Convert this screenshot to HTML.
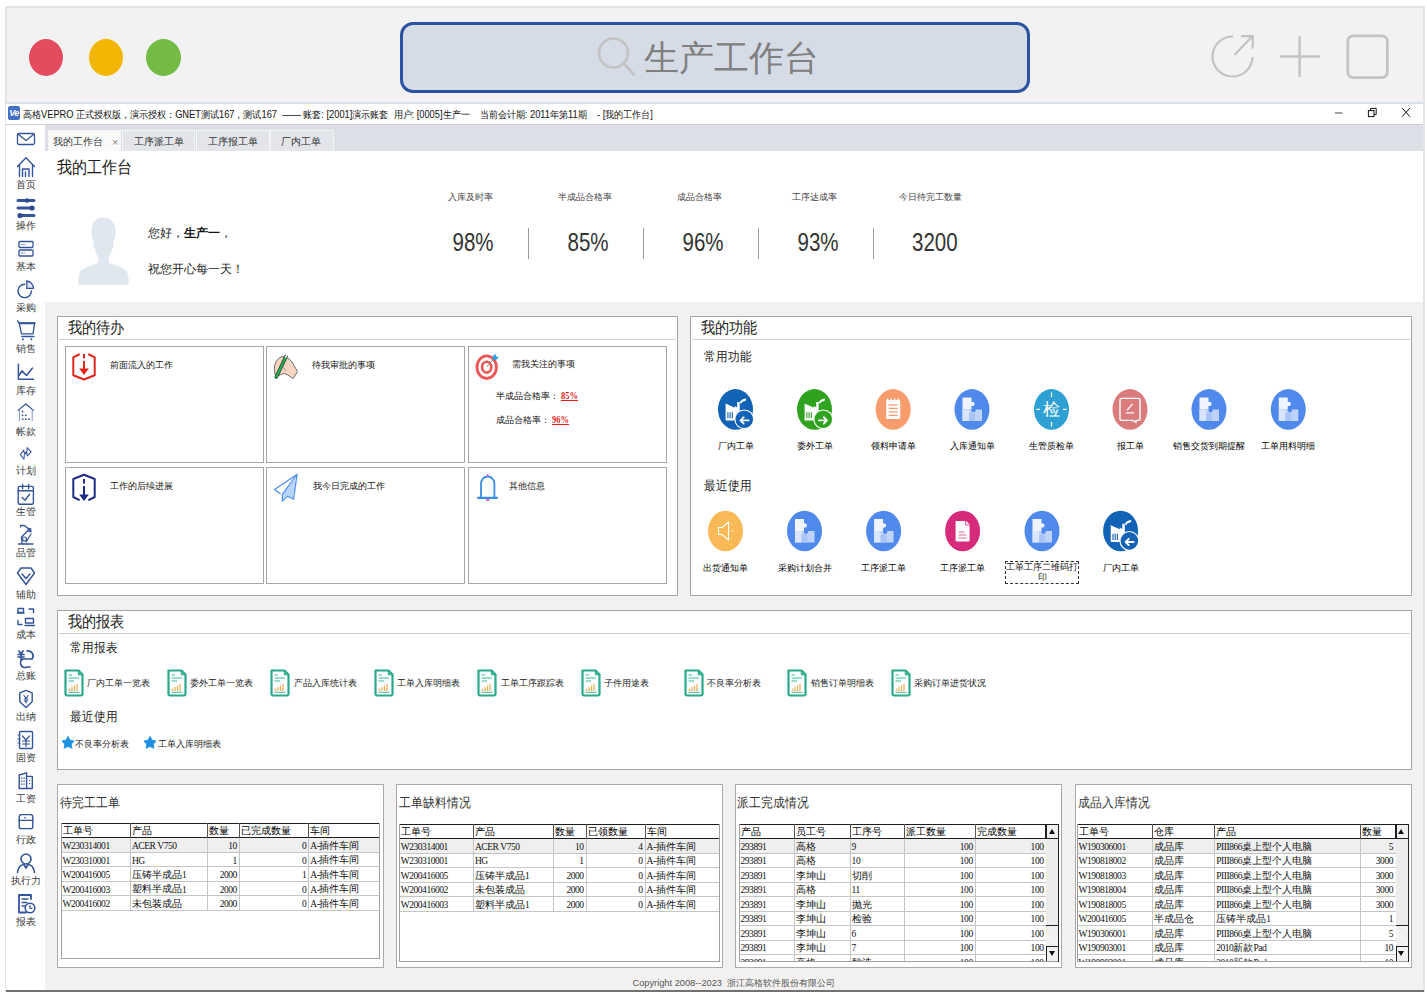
<!DOCTYPE html>
<html><head><meta charset="utf-8">
<style>
*{box-sizing:border-box;margin:0;padding:0}
html,body{width:1427px;height:992px;overflow:hidden;background:#fff;font-family:"Liberation Sans",sans-serif;color:#222}
.a{position:absolute}
.nw{white-space:nowrap}
#frame{left:5px;top:6px;width:1419.5px;height:986px;background:#f2f2f2;border:2px solid #e4e4e4;border-bottom:none}
.dot{position:absolute;border-radius:50%}
#search{left:400px;top:22px;width:630px;height:71px;border:3px solid #2b53a3;border-radius:13px;background:#d6dce6}
#titlebar{left:6px;top:102px;width:1417px;height:23px;background:#fff;border-top:2px solid #d9e0ea;border-bottom:1.5px solid #cfcfcf}
#tabbar{left:45px;top:125px;width:1378px;height:26px;background:#dcdfe6}
.tab{position:absolute;top:5px;height:21px;background:#e3e5ea;border:1px solid #f3f4f6;border-bottom:none;font-size:10px;color:#333;line-height:21px}
#sidebar{left:6px;top:125px;width:39px;height:865px;background:#fff}
#content{left:45px;top:151px;width:1378px;height:839px;background:#f2f1f0}
#header{left:45px;top:151px;width:1378px;height:151px;background:#fff}
.panel{position:absolute;background:#fff;border:1px solid #a6a6a6}
.ptitle{transform:scaleY(1.13);position:absolute;left:10px;top:0px;font-size:14px;color:#222;line-height:20px}
.psep{position:absolute;left:1px;right:1px;top:22px;height:1px;background:#cfcfcf}
.card{position:absolute;background:#fff;border:1px solid #a6a6a6}
.ctext{position:absolute;font-size:9px;color:#111;white-space:nowrap;line-height:12px}
.lbl{position:absolute;font-size:9px;color:#000;white-space:nowrap;text-align:center;line-height:12px}
.stat-l{position:absolute;top:190.5px;width:115px;text-align:center;font-size:9px;color:#444;line-height:12px}
.stat-n{position:absolute;top:227px;width:115px;text-align:center;font-size:25px;color:#333;line-height:30px}
.stat-d{position:absolute;top:228px;width:1px;height:31px;background:#9a9a9a}
.side-i{position:absolute;left:7px;width:38px;text-align:center}
.side-l{position:absolute;left:6px;width:40px;text-align:center;font-size:9.5px;color:#3a3a3a;line-height:12px}
.cond{display:inline-block;transform:scaleX(0.82);transform-origin:center}
.ttl{font-size:11.5px;line-height:16px;color:#333;transform:scaleY(1.1)}
.th{font-size:10px;line-height:12px;color:#000}
.td{font-size:9.5px;line-height:12px;color:#111}
.td i{font-style:normal;font-family:"Liberation Serif",serif;font-size:9.5px;letter-spacing:-0.45px;position:relative;top:0.3px}
.sy{transform:scaleY(1.13);transform-origin:50% 50%}
</style></head><body>
<svg width="0" height="0" style="position:absolute">
<defs>
<g id="factory">
<path d="M-9.9 -5.8 L-0.8 -1.7 V-3.5 L1.7 -2 V-7.3 H4.2 V2 L6 3 V11 H-9.9 Z" fill="#fff"/>
<path d="M4.2 -6.5 Q5 -10.5 10.5 -11 Q11 -9 9.5 -8.5 Q7 -8.5 5.5 -6 Z" fill="#fff"/>
<path d="M-7.6 2.8 V8.9 M-5.4 2.8 V8.9 M-3.2 2.8 V8.9" stroke="currentColor" stroke-width="1.1"/>
<circle cx="8.75" cy="9.9" r="9.9" fill="#fff"/>
<circle cx="8.75" cy="9.9" r="8.8" fill="currentColor"/>
</g>
<g id="puzzle">
<path d="M-9.5 -12 H-0.5 V-7.5 A2.2 2.2 0 1 1 -0.5 -3.5 V0 H-9.5 Z" fill="#eef3fd"/>
<path d="M-9.5 0 H-0.5 V-0.2 A2.2 2.2 0 1 0 3.6 0 H10 V11.5 H-9.5 Z" fill="#bfd3fa"/>
<path d="M-9.5 0 H-3 V11.5 H-9.5 Z" fill="#d9e5fc"/>
<path d="M-3 6 A3 3 0 0 1 3 6 V11.5 H-3 Z" fill="#a9c3f6"/>
</g>
</defs></svg>

<div id="frame" class="a"></div>
<div id="titlebar" class="a"></div>
<div id="tabbar" class="a"><div class="tab" style="left:3px;width:73px;background:#fafafa;border-color:#f6f6f6;padding-left:4px">我的工作台<span style="position:absolute;left:63px;top:1px;color:#888;font-size:11px">×</span></div>
<div class="tab" style="left:77px;width:73px;padding-left:11px">工序派工单</div>
<div class="tab" style="left:151px;width:74px;padding-left:11px">工序报工单</div>
<div class="tab" style="left:225px;width:64px;padding-left:10px">厂内工单</div></div>
<div id="sidebar" class="a"></div>
<div id="content" class="a"></div>
<div id="header" class="a"></div>
<div class="dot" style="left:29px;top:39px;width:34px;height:37px;background:#e44b5e"></div>
<div class="dot" style="left:89px;top:39px;width:34px;height:37px;background:#f2b705"></div>
<div class="dot" style="left:146px;top:39px;width:35px;height:37px;background:#73bb44"></div>
<div id="search" class="a"></div>
<svg class="a" style="left:590px;top:30px" width="60" height="56" viewBox="590 30 60 56">
<circle cx="613.5" cy="53" r="14.5" fill="none" stroke="#c3c3c3" stroke-width="2.6"/>
<line x1="623.5" y1="63.5" x2="634.5" y2="75" stroke="#c3c3c3" stroke-width="2.8"/>
</svg>
<div class="a nw" style="left:644px;top:33px;font-size:35px;line-height:50px;color:#808080">生产工作台</div>
<svg class="a" style="left:1200px;top:25px" width="200" height="65" viewBox="1200 25 200 65">
<path d="M1233 36.5 A20 20 0 1 0 1252.5 57" fill="none" stroke="#c3c3c3" stroke-width="2.2"/>
<path d="M1234.5 55 L1252 36.5 M1241 36.2 H1252.7 V48.5" fill="none" stroke="#c3c3c3" stroke-width="2.2"/>
<path d="M1299.6 36 V77 M1280 56.5 H1320" fill="none" stroke="#c3c3c3" stroke-width="2.4"/>
<rect x="1347.8" y="35.8" width="39.5" height="41.8" rx="5.5" fill="none" stroke="#c3c3c3" stroke-width="2.8"/>
</svg>
<div class="a" style="left:8px;top:106px;width:12px;height:14px;background:#4470c4;border-radius:2px;color:#fff;font-size:9px;font-weight:bold;font-style:italic;line-height:14px;text-align:center;letter-spacing:-0.5px">Ve</div>
<div class="a nw" style="left:23px;top:107.5px;font-size:9.3px;line-height:14px;color:#111;transform:scaleY(1.1);transform-origin:0 50%">高格VEPRO 正式授权版，演示授权：GNET测试167，测试167 &nbsp;—— 账套: [2001]演示账套 &nbsp;用户: [0005]生产一 &nbsp; &nbsp;当前会计期: 2011年第11期 &nbsp; &nbsp;- [我的工作台]</div>
<svg class="a" style="left:1320px;top:100px" width="100" height="25" viewBox="1320 100 100 25">
<line x1="1335" y1="113" x2="1342.5" y2="113" stroke="#666" stroke-width="1.2"/>
<rect x="1368.4" y="110.6" width="5.6" height="6" fill="#fff" stroke="#111" stroke-width="1"/>
<path d="M1370.4 110.6 V108.4 H1376.2 V114.6 H1374" fill="none" stroke="#111" stroke-width="1"/>
<path d="M1402 108 L1410 116.8 M1410 108 L1402 116.8" stroke="#111" stroke-width="1"/>
</svg>

<svg class="a" style="left:6px;top:125px" width="39" height="810" viewBox="6 125 39 810" fill="none" stroke="#33539a" stroke-width="1.3" stroke-linejoin="round" stroke-linecap="round">
<rect x="17.5" y="133.5" width="17" height="11" rx="1.5"/><path d="M18.5 134.5 L26 140.5 L33.5 134.5"/>
<path d="M17.5 166.5 L26 157.8 L34.5 166.5 M19.5 165 V176.5 M32.5 165 V176.5 M22.5 176.5 V169 H29 V176.5 M25.5 176.5 V172" stroke-width="1.4"/>
<g stroke-width="3"><path d="M18 200.5 H34 M18 208 H33 M21 215.5 H34"/></g>
<g fill="#2d4b8e" stroke="none"><circle cx="27" cy="200.5" r="2.3"/><circle cx="32" cy="208" r="2.6"/><circle cx="20" cy="215.5" r="2.6"/></g>
<rect x="19" y="241.5" width="14" height="6" rx="1"/><rect x="19" y="250" width="14" height="6" rx="1"/>
<path d="M21 244.5 H25 M21 253 H25" stroke="#7fa0d8" stroke-width="1"/>
<path d="M24.7 284.2 A6.7 6.7 0 1 0 31.4 290.9" stroke-width="1.4"/><path d="M26.8 281 A7.4 7.4 0 0 1 33.4 288.4 H26.8 Z" fill="#dfe7f6" stroke-width="1.3"/>
<path d="M17.6 321 L19.2 323.2 L21.5 333.8 H33 L34.6 323.2 H19.2" stroke-width="1.3"/><path d="M19.5 323.2 H34.6" stroke-width="2"/><path d="M21.8 336.5 H34" stroke-width="1.3"/><circle cx="22.9" cy="339.2" r="1" fill="#33539a" stroke="none"/><circle cx="31.4" cy="339.2" r="1" fill="#33539a" stroke="none"/>
<path d="M18.4 364.2 V379.3 H33.5 M19 375.5 L21.9 370.9 L26.5 375.5 L32.5 368" stroke-width="1.5"/>
<path d="M18 410.4 L25.8 404 L33.5 410.4" stroke-width="1.2"/><path d="M19.4 409.5 V420.6 M32.2 409.5 V420.6" stroke-width="1" stroke="#7d93c4"/><g fill="#33539a" stroke="none"><circle cx="22.6" cy="411.5" r="0.9"/><circle cx="22.6" cy="415.3" r="0.9"/><circle cx="25.8" cy="415.3" r="0.9"/><circle cx="22.6" cy="419.2" r="0.9"/><circle cx="25.8" cy="419.2" r="0.9"/><circle cx="29" cy="419.2" r="0.9"/></g>
<path d="M27.2 447.6 L31.1 451.8 L27.3 456 L27.2 453.7 L24.4 453.6 L26.9 451 Z M24 459.2 L20.4 454.6 L23.8 450 L24 452.3 L26.8 452.4 L24.3 455.2 Z" stroke-width="1.05"/>
<rect x="18.2" y="486.4" width="15.2" height="17.8" rx="1.5" stroke-width="1.4"/><path d="M18.2 490.8 H33.4 M22.6 484.5 V488.7 M28.6 484.5 V488.7 M22.2 497.5 L25 500.3 L29.6 494.3" stroke-width="1.4"/>
<path d="M18.5 544 H33 M22 543.5 L21.5 537 L29 529.5 M20.5 527 V525.5 H24.5 L29.5 529.5 L31 532" stroke-width="1.3"/><circle cx="24.5" cy="539" r="2" stroke-width="1.2"/><circle cx="29.5" cy="530" r="1.6" stroke-width="1.1"/><path d="M26 542 L31 534" stroke-width="1.2"/>
<path d="M21 568 H31 L34.5 573 L26 584.5 L17.5 573 Z" stroke-width="1.4"/><path d="M22 574 L26 578.5 L30 574" stroke-width="1.4"/>
<rect x="18" y="608.5" width="5.5" height="4" stroke-width="1.4"/><path d="M17.5 613 H24 M29 609 H33.5 V612.5 M18 620.5 V624.5 H22 M25.5 618.5 H33.5 V623 H25.5 Z M25 625.5 H34.5" stroke-width="1.4"/>
<path d="M19 651 L21 654 L23 651 M18 654.5 H24 M18 657 H24 M21 654 V660 M27 651 A5 5 0 0 1 32 659 H23 A4 4 0 0 0 27 667 L30 667" stroke-width="1.7"/>
<path d="M26 690.4 L32.2 692.8 V701.8 L26 707.4 L19.8 701.8 V692.8 Z" stroke-width="1.4"/><path d="M24 695.5 L26 698.5 L28 695.5 M24.2 699 H27.8 M24.2 701 H27.8 M26 698.5 V703" stroke-width="1.1"/>
<rect x="19.5" y="731.5" width="13" height="17" rx="1" stroke-width="1.4"/><path d="M22.5 736 L26 740 L29.5 736 M22.5 741 H29.5 M22.5 744 H29.5 M26 740 V746.5 M18 735 H20 M18 739 H20 M18 743 H20" stroke-width="1.2"/>
<path d="M19.2 788.5 V775 L26.6 772.8 V788.5 Z M26.6 776.4 H32.3 V788.5 H26.6" stroke-width="1.4"/><g fill="#33539a" stroke="none"><rect x="21" y="777.5" width="1.3" height="1.3"/><rect x="23.4" y="777.5" width="1.3" height="1.3"/><rect x="21" y="780.5" width="1.3" height="1.3"/><rect x="23.4" y="780.5" width="1.3" height="1.3"/><rect x="21" y="783.5" width="1.3" height="1.3"/><rect x="23.4" y="783.5" width="1.3" height="1.3"/><rect x="29" y="780" width="1.1" height="1.1"/><rect x="29" y="783" width="1.1" height="1.1"/></g>
<rect x="19.2" y="814.6" width="13.6" height="14" rx="2.2" stroke-width="1.4"/><path d="M19.2 820.4 H32.8" stroke-width="1.4"/><rect x="24.4" y="817" width="1.4" height="1.4" fill="#33539a" stroke="none"/>
<circle cx="26" cy="859" r="5" stroke-width="1.6"/><path d="M17.5 872.5 Q18.5 865 24 864.5 L26 868 L28 864.5 Q33.5 865 34.5 872.5" stroke-width="1.6"/>
<path d="M31 899 V895 H19 V912.5 H26" stroke-width="1.8"/><path d="M22 899 H28 M22 902.5 H27 M22 906 H25" stroke-width="1.3"/><circle cx="30" cy="908" r="4.8" stroke-width="1.6"/><path d="M30 905.5 V908.3 H32" stroke-width="1.2"/>
</svg>
<div class="side-l" style="top:179px">首页</div><div class="side-l" style="top:220px">操作</div><div class="side-l" style="top:261px">基本</div><div class="side-l" style="top:301.5px">采购</div><div class="side-l" style="top:343px">销售</div><div class="side-l" style="top:384.5px">库存</div><div class="side-l" style="top:425.5px">帐款</div><div class="side-l" style="top:464.5px">计划</div><div class="side-l" style="top:505.5px">生管</div><div class="side-l" style="top:547px">品管</div><div class="side-l" style="top:588.5px">辅助</div><div class="side-l" style="top:628.5px">成本</div><div class="side-l" style="top:670px">总账</div><div class="side-l" style="top:711px">出纳</div><div class="side-l" style="top:752px">固资</div><div class="side-l" style="top:793px">工资</div><div class="side-l" style="top:833.5px">行政</div><div class="side-l" style="top:875px">执行力</div><div class="side-l" style="top:916px">报表</div>
<div class="a nw sy" style="left:57px;top:157px;font-size:15px;line-height:20px;color:#1a1a1a">我的工作台</div>
<svg class="a" style="left:76px;top:215px" width="56" height="72" viewBox="76 215 56 72">
<path fill="#e1e7ef" d="M103 217.5 C96 217.5 91.5 223 91.5 231 C91.5 236 92.5 240 94 243 C93 244.5 93 246.5 94.5 248 C95.5 252 97.5 256 98.5 258.5 L98 263 C92 265 82 268 80 272 C78.5 275 78 280 78.5 285 L128.5 285 C129 280 128.5 275 127 272 C125 268 115 265 109 263 L108.5 258.5 C109.5 256 111.5 252 112.5 248 C114 246.5 114 244.5 113 243 C114.5 240 115.5 236 115.5 231 C115.5 223 111 217.5 103 217.5 Z"/>
</svg>
<div class="a nw" style="left:148px;top:224px;font-size:12px;line-height:18px;color:#222">您好，<b style="color:#111">生产一</b>，</div>
<div class="a nw" style="left:148px;top:260px;font-size:12px;line-height:18px;color:#222">祝您开心每一天！</div>
<div class="stat-l" style="left:413px">入库及时率</div>
<div class="stat-l" style="left:527px">半成品合格率</div>
<div class="stat-l" style="left:642px">成品合格率</div>
<div class="stat-l" style="left:757px">工序达成率</div>
<div class="stat-l" style="left:873px">今日待完工数量</div>
<div class="stat-n" style="left:416px"><span class="cond">98%</span></div>
<div class="stat-n" style="left:531px"><span class="cond">85%</span></div>
<div class="stat-n" style="left:646px"><span class="cond">96%</span></div>
<div class="stat-n" style="left:761px"><span class="cond">93%</span></div>
<div class="stat-n" style="left:877px"><span class="cond">3200</span></div>
<div class="stat-d" style="left:528px"></div><div class="stat-d" style="left:643px"></div><div class="stat-d" style="left:758px"></div><div class="stat-d" style="left:873px"></div>

<div class="panel" style="left:57px;top:316px;width:621px;height:280px">
<div class="ptitle">我的待办</div><div class="psep"></div></div>
<div class="card" style="left:65px;top:346px;width:199px;height:117px"></div>
<div class="card" style="left:266px;top:346px;width:199px;height:117px"></div>
<div class="card" style="left:468px;top:346px;width:199px;height:117px"></div>
<div class="card" style="left:65px;top:467px;width:199px;height:117px"></div>
<div class="card" style="left:266px;top:467px;width:199px;height:117px"></div>
<div class="card" style="left:468px;top:467px;width:199px;height:117px"></div>
<svg class="a" style="left:66px;top:347px" width="60" height="40" viewBox="66 347 60 40">
<path d="M79 354.5 L73.3 357.3 V375.3 L84 379.5 L94.7 375.3 V357.3 L89 354.5" fill="none" stroke="#e0261b" stroke-width="2" stroke-linejoin="round" stroke-linecap="round"/>
<path d="M84 354 V358.5 M84 361 V370" stroke="#e0261b" stroke-width="2"/>
<path d="M79.2 368.6 H88.9 L84 375 Z" fill="#e0261b"/>
</svg>
<div class="ctext" style="left:110px;top:358.5px">前面流入的工作</div>
<svg class="a" style="left:268px;top:347px" width="40" height="40" viewBox="268 347 40 40">
<path d="M282 356.5 C278 358 275.2 362 274.6 366 C274.2 369 274.4 372 275.2 374.8 L279 375.5 C281 374.5 283 373.2 285 373.6 C288 375 291 377 293.2 378.5 L297.5 371.5 C296.2 369.3 295 367.2 294 365.5 C292.5 362.2 290.5 359.6 287 357.6 Z" fill="#f8d5c2" stroke="#5a5a5a" stroke-width="0.9" stroke-linejoin="round"/>
<path d="M276.3 377 L286 356.5" stroke="#333" stroke-width="3.6" stroke-linecap="round"/>
<path d="M276.3 377 L285.6 357.5" stroke="#1db24b" stroke-width="2.2" stroke-linecap="round"/>
<path d="M285.8 357 L286.6 355.2" stroke="#fff" stroke-width="1.6" stroke-linecap="round"/>
<path d="M281 366 C283 367 285 369 286 371" fill="none" stroke="#7a6a60" stroke-width="0.7"/>
</svg>
<div class="ctext" style="left:311.5px;top:358.5px">待我审批的事项</div>
<svg class="a" style="left:470px;top:347px" width="40" height="40" viewBox="470 347 40 40">
<ellipse cx="486.7" cy="367.2" rx="9.7" ry="11.3" fill="none" stroke="#ef5454" stroke-width="2.8"/>
<ellipse cx="486.7" cy="367.2" rx="4.6" ry="5.4" fill="none" stroke="#ef5454" stroke-width="2.6"/>
<path d="M486.8 367 L494.5 358" stroke="#777" stroke-width="0.9"/>
<path d="M492.5 356.5 L495.5 353.5 L496 356.5 L499 357 L496 360 L493.5 360 Z" fill="#2ea1e0"/>
</svg>
<div class="ctext" style="left:512px;top:358px">需我关注的事项</div>
<div class="ctext" style="left:495.5px;top:389.5px;color:#111;font-size:9.3px">半成品合格率：<b style="color:#e51c1c;text-decoration:underline;font-family:'Liberation Serif',serif;margin-left:2px;font-size:10px;display:inline-block;transform:scaleX(0.85);transform-origin:left">85%</b></div>
<div class="ctext" style="left:495.5px;top:413.5px;color:#111;font-size:9.3px">成品合格率：<b style="color:#e51c1c;text-decoration:underline;font-family:'Liberation Serif',serif;margin-left:2px;font-size:10px;display:inline-block;transform:scaleX(0.85);transform-origin:left">96%</b></div>
<svg class="a" style="left:66px;top:468px" width="60" height="40" viewBox="66 468 60 40">
<path d="M79 499.8 L73.3 497 V479 L84 474.7 L94.7 479 V497 L89 499.8" fill="none" stroke="#1d2a86" stroke-width="2" stroke-linejoin="round" stroke-linecap="round"/>
<path d="M84 479 V483.5 M84 486 V495" stroke="#1d2a86" stroke-width="2"/>
<path d="M79.2 494.5 H88.9 L84 501 Z" fill="#1d2a86"/>
</svg>
<div class="ctext" style="left:110px;top:479.5px">工作的后续进展</div>
<svg class="a" style="left:268px;top:468px" width="40" height="40" viewBox="268 468 40 40">
<path d="M297 474.5 L274.5 489.5 L280.5 494 M297 474.5 L282.5 494.5 L282.5 501 L287.5 496 L293.5 499 Z" fill="none" stroke="#4f8ff0" stroke-width="1.4" stroke-linejoin="round"/>
<path d="M296 476 L283.5 494.5 L283.5 499.5 L287.5 495.5 L293 498.5 Z" fill="#b9d4fb"/>
</svg>
<div class="ctext" style="left:312.5px;top:479.5px">我今日完成的工作</div>
<svg class="a" style="left:470px;top:468px" width="40" height="40" viewBox="470 468 40 40">
<path d="M481 497.5 V483.7 A6.7 7.2 0 0 1 494.4 483.7 V497.5" fill="none" stroke="#3a8ee6" stroke-width="1.8"/>
<path d="M478 497.8 H497" stroke="#3a8ee6" stroke-width="2.2" stroke-linecap="round"/>
<path d="M487.7 474 V476.3" stroke="#e05ce8" stroke-width="1.6"/>
<path d="M485.7 499 A2 2 0 0 0 489.7 499" fill="#e05ce8"/>
</svg>
<div class="ctext" style="left:509px;top:480px">其他信息</div>

<div class="panel" style="left:690px;top:316px;width:722px;height:280px">
<div class="ptitle">我的功能</div><div class="psep"></div>
<div class="a nw" style="left:13px;top:31.5px;font-size:12px;line-height:16px;color:#222;transform:scaleY(1.12)">常用功能</div>
<div class="a nw" style="left:13px;top:160.5px;font-size:12px;line-height:16px;color:#222;transform:scaleY(1.12)">最近使用</div>
</div>
<svg class="a" style="left:700px;top:380px" width="620" height="180" viewBox="700 380 620 180">
<g transform="translate(735.5 409.4)" style="color:#1262b5"><ellipse rx="17.5" ry="20.3" fill="currentColor"/><use href="#factory"/><path d="M13 11 H5 M8.2 7.8 L5 11 L8.2 14.2" fill="none" stroke="#fff" stroke-width="1.8" stroke-linecap="round" stroke-linejoin="round"/></g>
<g transform="translate(814.5 409.4)" style="color:#2fa21f"><ellipse rx="17.5" ry="20.3" fill="currentColor"/><use href="#factory"/><path d="M4.5 11 H12.5 M9.3 7.8 L12.5 11 L9.3 14.2" fill="none" stroke="#fff" stroke-width="1.8" stroke-linecap="round" stroke-linejoin="round"/></g>
<g transform="translate(893.2 409.4)"><ellipse rx="17.5" ry="20.3" fill="#f89c6d"/><rect x="-7" y="-9.5" width="14" height="19" rx="1" fill="#fff"/><path d="M-5.5 -11 V-8 M-2 -11 V-8 M1.5 -11 V-8 M5 -11 V-8" stroke="#fff" stroke-width="1.5"/><path d="M-4.5 -4.5 H4.5 M-4.5 -1 H4.5 M-4.5 2.5 H4.5 M-4.5 6 H4.5" stroke="#f89c6d" stroke-width="1.3"/></g>
<g transform="translate(972 409.4)"><ellipse rx="17.5" ry="20.3" fill="#5089ec"/><use href="#puzzle"/></g>
<g transform="translate(1051.5 409.4)"><ellipse rx="17.5" ry="20.3" fill="#2ea0d4"/><path d="M0 -17 V-12.5 M0 12.5 V17 M-15 0 H-11.5 M11.5 0 H15" stroke="#fff" stroke-width="1.3"/><text x="0" y="6" text-anchor="middle" font-size="17" fill="#fff" font-family="Liberation Sans, sans-serif">检</text></g>
<g transform="translate(1130 409.4)"><ellipse rx="17.5" ry="20.3" fill="#da7b7c"/><path d="M-2 11 H-8.5 A1.5 1.5 0 0 1 -10 9.5 V-9.5 A1.5 1.5 0 0 1 -8.5 -11 H8.5 A1.5 1.5 0 0 1 10 -9.5 V9.5 A1.5 1.5 0 0 1 8.5 11 H6 V13 L2.5 11 H-2" fill="none" stroke="#fff" stroke-width="1.4"/><path d="M-4 3.5 H4 M-3 1 L2.5 -5.5" stroke="#fff" stroke-width="1.4"/></g>
<g transform="translate(1209 409.4)"><ellipse rx="17.5" ry="20.3" fill="#5089ec"/><use href="#puzzle"/></g>
<g transform="translate(1288.3 409.4)"><ellipse rx="17.5" ry="20.3" fill="#5089ec"/><use href="#puzzle"/></g>
<g transform="translate(725.5 531)"><ellipse rx="17.5" ry="20.3" fill="#f8b956"/><path d="M-7 -3.5 H-3.5 L3 -9 V9 L-3.5 3.5 H-7 Z" fill="none" stroke="#fff" stroke-width="1.1"/><path d="M6 -7.5 V-6.5 M6.5 -1 V1 M6 6.5 V7.5" stroke="#fff" stroke-width="1.1"/></g>
<g transform="translate(804.5 531)"><ellipse rx="17.5" ry="20.3" fill="#5089ec"/><use href="#puzzle"/></g>
<g transform="translate(883.6 531)"><ellipse rx="17.5" ry="20.3" fill="#5089ec"/><use href="#puzzle"/></g>
<g transform="translate(962.6 531)"><ellipse rx="17.5" ry="20.3" fill="#d62a7b"/><path d="M-7 -10 H3.5 L7 -6.5 V9.5 A1 1 0 0 1 6 10.5 H-6 A1 1 0 0 1 -7 9.5 Z" fill="#fff"/><path d="M3 -10 V-6 H7" fill="none" stroke="#d62a7b" stroke-width="0.8"/><path d="M-4 1 H2 M-4 4 H4 M-4 7 H4" stroke="#e06a9e" stroke-width="1.1"/></g>
<g transform="translate(1042 531)"><ellipse rx="17.5" ry="20.3" fill="#5089ec"/><use href="#puzzle"/></g>
<g transform="translate(1120.6 531)" style="color:#1262b5"><ellipse rx="17.5" ry="20.3" fill="currentColor"/><use href="#factory"/><path d="M13 11 H5 M8.2 7.8 L5 11 L8.2 14.2" fill="none" stroke="#fff" stroke-width="1.8" stroke-linecap="round" stroke-linejoin="round"/></g>
</svg>
<div class="lbl" style="left:685.5px;width:100px;top:439.5px">厂内工单</div><div class="lbl" style="left:764.5px;width:100px;top:439.5px">委外工单</div><div class="lbl" style="left:843.2px;width:100px;top:439.5px">领料申请单</div><div class="lbl" style="left:922px;width:100px;top:439.5px">入库通知单</div><div class="lbl" style="left:1001.5px;width:100px;top:439.5px">生管质检单</div><div class="lbl" style="left:1080px;width:100px;top:439.5px">报工单</div><div class="lbl" style="left:1159px;width:100px;top:439.5px">销售交货到期提醒</div><div class="lbl" style="left:1238.3px;width:100px;top:439.5px">工单用料明细</div><div class="lbl" style="left:675.5px;width:100px;top:561.5px">出货通知单</div><div class="lbl" style="left:754.5px;width:100px;top:561.5px">采购计划合并</div><div class="lbl" style="left:833.6px;width:100px;top:561.5px">工序派工单</div><div class="lbl" style="left:912.6px;width:100px;top:561.5px">工序派工单</div><div class="a" style="left:1005px;top:561px;width:74px;height:23px;border:1px dashed #333;font-size:9px;line-height:10px;text-align:center;color:#222;overflow:hidden;word-break:break-all">工单工序二维码打印</div><div class="lbl" style="left:1070.6px;width:100px;top:561.5px">厂内工单</div>
<div class="panel" style="left:57px;top:610px;width:1355px;height:160px">
<div class="ptitle">我的报表</div><div class="psep"></div>
<div class="a nw" style="left:12px;top:29px;font-size:12px;line-height:16px;color:#222;transform:scaleY(1.12)">常用报表</div>
<div class="a nw" style="left:12px;top:97.5px;font-size:12px;line-height:16px;color:#222;transform:scaleY(1.12)">最近使用</div>
</div>
<svg width="0" height="0" style="position:absolute"><defs>
<g id="rpt"><path d="M1.5 1.5 H14.5 L18.5 5.5 V25 A1.5 1.5 0 0 1 17 26.5 H3 A1.5 1.5 0 0 1 1.5 25 Z" fill="#fff" stroke="#2aa88a" stroke-width="2.2" stroke-linejoin="round"/><path d="M14.3 2 V5.8 H18" fill="#3fbf9c" stroke="#2aa88a" stroke-width="1"/>
<path d="M4.5 6 H8 M4.5 9 H15 M4.5 12 H10" stroke="#3bb99a" stroke-width="1.2"/>
<path d="M5.5 22 V19.5 M8 22 V18 M10.5 22 V16.5 M13 22 V15" stroke="#f5b35a" stroke-width="1.3"/>
<path d="M4.5 23.3 H15.5" stroke="#3bb99a" stroke-width="1"/></g>
<path id="star" d="M6.00 0.40 L8.06 4.17 L12.28 4.96 L9.33 8.08 L9.88 12.34 L6.00 10.50 L2.12 12.34 L2.67 8.08 L-0.28 4.96 L3.94 4.17 Z" fill="#1b8fe0"/>
</defs></svg>
<svg class="a" style="left:63.5px;top:668.5px" width="21" height="29" viewBox="0 0 21 29"><use href="#rpt"/></svg><div class="ctext" style="left:87.0px;top:677px;color:#222">厂内工单一览表</div><svg class="a" style="left:166.9px;top:668.5px" width="21" height="29" viewBox="0 0 21 29"><use href="#rpt"/></svg><div class="ctext" style="left:190.4px;top:677px;color:#222">委外工单一览表</div><svg class="a" style="left:270.3px;top:668.5px" width="21" height="29" viewBox="0 0 21 29"><use href="#rpt"/></svg><div class="ctext" style="left:293.8px;top:677px;color:#222">产品入库统计表</div><svg class="a" style="left:373.7px;top:668.5px" width="21" height="29" viewBox="0 0 21 29"><use href="#rpt"/></svg><div class="ctext" style="left:397.2px;top:677px;color:#222">工单入库明细表</div><svg class="a" style="left:477.1px;top:668.5px" width="21" height="29" viewBox="0 0 21 29"><use href="#rpt"/></svg><div class="ctext" style="left:500.6px;top:677px;color:#222">工单工序跟踪表</div><svg class="a" style="left:580.5px;top:668.5px" width="21" height="29" viewBox="0 0 21 29"><use href="#rpt"/></svg><div class="ctext" style="left:604.0px;top:677px;color:#222">子件用途表</div><svg class="a" style="left:683.9px;top:668.5px" width="21" height="29" viewBox="0 0 21 29"><use href="#rpt"/></svg><div class="ctext" style="left:707.4px;top:677px;color:#222">不良率分析表</div><svg class="a" style="left:787.3px;top:668.5px" width="21" height="29" viewBox="0 0 21 29"><use href="#rpt"/></svg><div class="ctext" style="left:810.8px;top:677px;color:#222">销售订单明细表</div><svg class="a" style="left:890.7px;top:668.5px" width="21" height="29" viewBox="0 0 21 29"><use href="#rpt"/></svg><div class="ctext" style="left:914.2px;top:677px;color:#222">采购订单进货状况</div><svg class="a" style="left:61.8px;top:736px" width="12" height="14" viewBox="0 0 12 14"><use href="#star" fill="#1b8fe0" stroke="#1b8fe0" stroke-width="0.8" stroke-linejoin="round"/></svg><div class="ctext" style="left:75px;top:737.5px;color:#222">不良率分析表</div><svg class="a" style="left:144.4px;top:736px" width="12" height="14" viewBox="0 0 12 14"><use href="#star" fill="#1b8fe0" stroke="#1b8fe0" stroke-width="0.8" stroke-linejoin="round"/></svg><div class="ctext" style="left:157.5px;top:737.5px;color:#222">工单入库明细表</div><div class="a nw" style="left:632.5px;top:977px;font-size:9.25px;line-height:12px;color:#555">Copyright 2008--2023 &nbsp;浙江高格软件股份有限公司</div><div class="a" style="left:6px;top:990px;width:1418px;height:2px;background:#717171"></div>
<!-- TABLES --><div class="a" style="left:57px;top:784px;width:327px;height:184px;background:#fff;border:1px solid #a9a9a9"></div><div class="a nw ttl" style="left:60px;top:794.5px">待完工工单</div><div class="a" style="left:61px;top:822.8px;width:318.8px;height:136.70000000000005px;background:#fff;overflow:hidden"><div class="a" style="left:0;top:15.5px;width:318.8px;height:14.5px;background:#efefef;border-bottom:1px solid #c6c6c6"></div><div class="a nw td" style="left:1.5px;top:17.0px"><i>W230314001</i></div><div class="a" style="left:68.9px;top:15.5px;width:1px;height:14.5px;background:#c6c6c6"></div><div class="a nw td" style="left:70.9px;top:17.0px"><i>ACER&nbsp;V750</i></div><div class="a" style="left:146.0px;top:15.5px;width:1px;height:14.5px;background:#c6c6c6"></div><div class="a nw td" style="left:146.5px;width:29.400000000000006px;text-align:right;top:17.0px"><i>10</i></div><div class="a" style="left:177.9px;top:15.5px;width:1px;height:14.5px;background:#c6c6c6"></div><div class="a nw td" style="left:178.4px;width:66.9px;text-align:right;top:17.0px"><i>0</i></div><div class="a" style="left:247.3px;top:15.5px;width:1px;height:14.5px;background:#c6c6c6"></div><div class="a nw td" style="left:249.3px;top:17.0px"><i>A-</i>插件车间</div><div class="a" style="left:0;top:30.0px;width:318.8px;height:14.5px;background:#fff;border-bottom:1px solid #c6c6c6"></div><div class="a nw td" style="left:1.5px;top:31.5px"><i>W230310001</i></div><div class="a" style="left:68.9px;top:30.0px;width:1px;height:14.5px;background:#c6c6c6"></div><div class="a nw td" style="left:70.9px;top:31.5px"><i>HG</i></div><div class="a" style="left:146.0px;top:30.0px;width:1px;height:14.5px;background:#c6c6c6"></div><div class="a nw td" style="left:146.5px;width:29.400000000000006px;text-align:right;top:31.5px"><i>1</i></div><div class="a" style="left:177.9px;top:30.0px;width:1px;height:14.5px;background:#c6c6c6"></div><div class="a nw td" style="left:178.4px;width:66.9px;text-align:right;top:31.5px"><i>0</i></div><div class="a" style="left:247.3px;top:30.0px;width:1px;height:14.5px;background:#c6c6c6"></div><div class="a nw td" style="left:249.3px;top:31.5px"><i>A-</i>插件车间</div><div class="a" style="left:0;top:44.5px;width:318.8px;height:14.5px;background:#fff;border-bottom:1px solid #c6c6c6"></div><div class="a nw td" style="left:1.5px;top:46.0px"><i>W200416005</i></div><div class="a" style="left:68.9px;top:44.5px;width:1px;height:14.5px;background:#c6c6c6"></div><div class="a nw td" style="left:70.9px;top:46.0px">压铸半成品<i>1</i></div><div class="a" style="left:146.0px;top:44.5px;width:1px;height:14.5px;background:#c6c6c6"></div><div class="a nw td" style="left:146.5px;width:29.400000000000006px;text-align:right;top:46.0px"><i>2000</i></div><div class="a" style="left:177.9px;top:44.5px;width:1px;height:14.5px;background:#c6c6c6"></div><div class="a nw td" style="left:178.4px;width:66.9px;text-align:right;top:46.0px"><i>1</i></div><div class="a" style="left:247.3px;top:44.5px;width:1px;height:14.5px;background:#c6c6c6"></div><div class="a nw td" style="left:249.3px;top:46.0px"><i>A-</i>插件车间</div><div class="a" style="left:0;top:59.0px;width:318.8px;height:14.5px;background:#fff;border-bottom:1px solid #c6c6c6"></div><div class="a nw td" style="left:1.5px;top:60.5px"><i>W200416003</i></div><div class="a" style="left:68.9px;top:59.0px;width:1px;height:14.5px;background:#c6c6c6"></div><div class="a nw td" style="left:70.9px;top:60.5px">塑料半成品<i>1</i></div><div class="a" style="left:146.0px;top:59.0px;width:1px;height:14.5px;background:#c6c6c6"></div><div class="a nw td" style="left:146.5px;width:29.400000000000006px;text-align:right;top:60.5px"><i>2000</i></div><div class="a" style="left:177.9px;top:59.0px;width:1px;height:14.5px;background:#c6c6c6"></div><div class="a nw td" style="left:178.4px;width:66.9px;text-align:right;top:60.5px"><i>0</i></div><div class="a" style="left:247.3px;top:59.0px;width:1px;height:14.5px;background:#c6c6c6"></div><div class="a nw td" style="left:249.3px;top:60.5px"><i>A-</i>插件车间</div><div class="a" style="left:0;top:73.5px;width:318.8px;height:14.5px;background:#fff;border-bottom:1px solid #c6c6c6"></div><div class="a nw td" style="left:1.5px;top:75.0px"><i>W200416002</i></div><div class="a" style="left:68.9px;top:73.5px;width:1px;height:14.5px;background:#c6c6c6"></div><div class="a nw td" style="left:70.9px;top:75.0px">未包装成品</div><div class="a" style="left:146.0px;top:73.5px;width:1px;height:14.5px;background:#c6c6c6"></div><div class="a nw td" style="left:146.5px;width:29.400000000000006px;text-align:right;top:75.0px"><i>2000</i></div><div class="a" style="left:177.9px;top:73.5px;width:1px;height:14.5px;background:#c6c6c6"></div><div class="a nw td" style="left:178.4px;width:66.9px;text-align:right;top:75.0px"><i>0</i></div><div class="a" style="left:247.3px;top:73.5px;width:1px;height:14.5px;background:#c6c6c6"></div><div class="a nw td" style="left:249.3px;top:75.0px"><i>A-</i>插件车间</div><div class="a" style="left:0;top:0;width:318.8px;height:15.5px;background:#fff;border:1px solid #1e1e1e;border-bottom-width:1.3px"></div><div class="a nw th" style="left:1.5px;top:2.5px">工单号</div><div class="a" style="left:68.9px;top:0;width:1px;height:15.5px;background:#555"></div><div class="a nw th" style="left:70.9px;top:2.5px">产品</div><div class="a" style="left:146.0px;top:0;width:1px;height:15.5px;background:#555"></div><div class="a nw th" style="left:148.0px;top:2.5px">数量</div><div class="a" style="left:177.9px;top:0;width:1px;height:15.5px;background:#555"></div><div class="a nw th" style="left:179.9px;top:2.5px">已完成数量</div><div class="a" style="left:247.3px;top:0;width:1px;height:15.5px;background:#555"></div><div class="a nw th" style="left:249.3px;top:2.5px">车间</div><div class="a" style="left:0;top:0;width:318.8px;height:136.70000000000005px;border:1px solid #a0a0a0;border-top:none"></div></div><div class="a" style="left:396px;top:784px;width:326.5px;height:184px;background:#fff;border:1px solid #a9a9a9"></div><div class="a nw ttl" style="left:399px;top:794.5px">工单缺料情况</div><div class="a" style="left:399.2px;top:823.5px;width:320.8px;height:138.0px;background:#fff;overflow:hidden"><div class="a" style="left:0;top:15.5px;width:320.8px;height:14.5px;background:#efefef;border-bottom:1px solid #c6c6c6"></div><div class="a nw td" style="left:1.5px;top:17.0px"><i>W230314001</i></div><div class="a" style="left:73.69999999999999px;top:15.5px;width:1px;height:14.5px;background:#c6c6c6"></div><div class="a nw td" style="left:75.69999999999999px;top:17.0px"><i>ACER&nbsp;V750</i></div><div class="a" style="left:153.40000000000003px;top:15.5px;width:1px;height:14.5px;background:#c6c6c6"></div><div class="a nw td" style="left:153.90000000000003px;width:30.600000000000023px;text-align:right;top:17.0px"><i>10</i></div><div class="a" style="left:186.50000000000006px;top:15.5px;width:1px;height:14.5px;background:#c6c6c6"></div><div class="a nw td" style="left:187.00000000000006px;width:56.39999999999998px;text-align:right;top:17.0px"><i>4</i></div><div class="a" style="left:245.40000000000003px;top:15.5px;width:1px;height:14.5px;background:#c6c6c6"></div><div class="a nw td" style="left:247.40000000000003px;top:17.0px"><i>A-</i>插件车间</div><div class="a" style="left:0;top:30.0px;width:320.8px;height:14.5px;background:#fff;border-bottom:1px solid #c6c6c6"></div><div class="a nw td" style="left:1.5px;top:31.5px"><i>W230310001</i></div><div class="a" style="left:73.69999999999999px;top:30.0px;width:1px;height:14.5px;background:#c6c6c6"></div><div class="a nw td" style="left:75.69999999999999px;top:31.5px"><i>HG</i></div><div class="a" style="left:153.40000000000003px;top:30.0px;width:1px;height:14.5px;background:#c6c6c6"></div><div class="a nw td" style="left:153.90000000000003px;width:30.600000000000023px;text-align:right;top:31.5px"><i>1</i></div><div class="a" style="left:186.50000000000006px;top:30.0px;width:1px;height:14.5px;background:#c6c6c6"></div><div class="a nw td" style="left:187.00000000000006px;width:56.39999999999998px;text-align:right;top:31.5px"><i>0</i></div><div class="a" style="left:245.40000000000003px;top:30.0px;width:1px;height:14.5px;background:#c6c6c6"></div><div class="a nw td" style="left:247.40000000000003px;top:31.5px"><i>A-</i>插件车间</div><div class="a" style="left:0;top:44.5px;width:320.8px;height:14.5px;background:#fff;border-bottom:1px solid #c6c6c6"></div><div class="a nw td" style="left:1.5px;top:46.0px"><i>W200416005</i></div><div class="a" style="left:73.69999999999999px;top:44.5px;width:1px;height:14.5px;background:#c6c6c6"></div><div class="a nw td" style="left:75.69999999999999px;top:46.0px">压铸半成品<i>1</i></div><div class="a" style="left:153.40000000000003px;top:44.5px;width:1px;height:14.5px;background:#c6c6c6"></div><div class="a nw td" style="left:153.90000000000003px;width:30.600000000000023px;text-align:right;top:46.0px"><i>2000</i></div><div class="a" style="left:186.50000000000006px;top:44.5px;width:1px;height:14.5px;background:#c6c6c6"></div><div class="a nw td" style="left:187.00000000000006px;width:56.39999999999998px;text-align:right;top:46.0px"><i>0</i></div><div class="a" style="left:245.40000000000003px;top:44.5px;width:1px;height:14.5px;background:#c6c6c6"></div><div class="a nw td" style="left:247.40000000000003px;top:46.0px"><i>A-</i>插件车间</div><div class="a" style="left:0;top:59.0px;width:320.8px;height:14.5px;background:#fff;border-bottom:1px solid #c6c6c6"></div><div class="a nw td" style="left:1.5px;top:60.5px"><i>W200416002</i></div><div class="a" style="left:73.69999999999999px;top:59.0px;width:1px;height:14.5px;background:#c6c6c6"></div><div class="a nw td" style="left:75.69999999999999px;top:60.5px">未包装成品</div><div class="a" style="left:153.40000000000003px;top:59.0px;width:1px;height:14.5px;background:#c6c6c6"></div><div class="a nw td" style="left:153.90000000000003px;width:30.600000000000023px;text-align:right;top:60.5px"><i>2000</i></div><div class="a" style="left:186.50000000000006px;top:59.0px;width:1px;height:14.5px;background:#c6c6c6"></div><div class="a nw td" style="left:187.00000000000006px;width:56.39999999999998px;text-align:right;top:60.5px"><i>0</i></div><div class="a" style="left:245.40000000000003px;top:59.0px;width:1px;height:14.5px;background:#c6c6c6"></div><div class="a nw td" style="left:247.40000000000003px;top:60.5px"><i>A-</i>插件车间</div><div class="a" style="left:0;top:73.5px;width:320.8px;height:14.5px;background:#fff;border-bottom:1px solid #c6c6c6"></div><div class="a nw td" style="left:1.5px;top:75.0px"><i>W200416003</i></div><div class="a" style="left:73.69999999999999px;top:73.5px;width:1px;height:14.5px;background:#c6c6c6"></div><div class="a nw td" style="left:75.69999999999999px;top:75.0px">塑料半成品<i>1</i></div><div class="a" style="left:153.40000000000003px;top:73.5px;width:1px;height:14.5px;background:#c6c6c6"></div><div class="a nw td" style="left:153.90000000000003px;width:30.600000000000023px;text-align:right;top:75.0px"><i>2000</i></div><div class="a" style="left:186.50000000000006px;top:73.5px;width:1px;height:14.5px;background:#c6c6c6"></div><div class="a nw td" style="left:187.00000000000006px;width:56.39999999999998px;text-align:right;top:75.0px"><i>0</i></div><div class="a" style="left:245.40000000000003px;top:73.5px;width:1px;height:14.5px;background:#c6c6c6"></div><div class="a nw td" style="left:247.40000000000003px;top:75.0px"><i>A-</i>插件车间</div><div class="a" style="left:0;top:0;width:320.8px;height:15.5px;background:#fff;border:1px solid #1e1e1e;border-bottom-width:1.3px"></div><div class="a nw th" style="left:1.5px;top:2.5px">工单号</div><div class="a" style="left:73.69999999999999px;top:0;width:1px;height:15.5px;background:#555"></div><div class="a nw th" style="left:75.69999999999999px;top:2.5px">产品</div><div class="a" style="left:153.40000000000003px;top:0;width:1px;height:15.5px;background:#555"></div><div class="a nw th" style="left:155.40000000000003px;top:2.5px">数量</div><div class="a" style="left:186.50000000000006px;top:0;width:1px;height:15.5px;background:#555"></div><div class="a nw th" style="left:188.50000000000006px;top:2.5px">已领数量</div><div class="a" style="left:245.40000000000003px;top:0;width:1px;height:15.5px;background:#555"></div><div class="a nw th" style="left:247.40000000000003px;top:2.5px">车间</div><div class="a" style="left:0;top:0;width:320.8px;height:138.0px;border:1px solid #a0a0a0;border-top:none"></div></div><div class="a" style="left:735px;top:784px;width:327px;height:184px;background:#fff;border:1px solid #a9a9a9"></div><div class="a nw ttl" style="left:737px;top:794.5px">派工完成情况</div><div class="a" style="left:739px;top:823.5px;width:320px;height:138.0px;background:#fff;overflow:hidden"><div class="a" style="left:0;top:15.5px;width:307px;height:14.5px;background:#efefef;border-bottom:1px solid #c6c6c6"></div><div class="a nw td" style="left:1.5px;top:17.0px"><i>293891</i></div><div class="a" style="left:54.89999999999998px;top:15.5px;width:1px;height:14.5px;background:#c6c6c6"></div><div class="a nw td" style="left:56.89999999999998px;top:17.0px">高格</div><div class="a" style="left:110.60000000000002px;top:15.5px;width:1px;height:14.5px;background:#c6c6c6"></div><div class="a nw td" style="left:112.60000000000002px;top:17.0px"><i>9</i></div><div class="a" style="left:165.0px;top:15.5px;width:1px;height:14.5px;background:#c6c6c6"></div><div class="a nw td" style="left:165.5px;width:68.20000000000005px;text-align:right;top:17.0px"><i>100</i></div><div class="a" style="left:235.70000000000005px;top:15.5px;width:1px;height:14.5px;background:#c6c6c6"></div><div class="a nw td" style="left:236.20000000000005px;width:68.29999999999995px;text-align:right;top:17.0px"><i>100</i></div><div class="a" style="left:0;top:30.0px;width:307px;height:14.5px;background:#fff;border-bottom:1px solid #c6c6c6"></div><div class="a nw td" style="left:1.5px;top:31.5px"><i>293891</i></div><div class="a" style="left:54.89999999999998px;top:30.0px;width:1px;height:14.5px;background:#c6c6c6"></div><div class="a nw td" style="left:56.89999999999998px;top:31.5px">高格</div><div class="a" style="left:110.60000000000002px;top:30.0px;width:1px;height:14.5px;background:#c6c6c6"></div><div class="a nw td" style="left:112.60000000000002px;top:31.5px"><i>10</i></div><div class="a" style="left:165.0px;top:30.0px;width:1px;height:14.5px;background:#c6c6c6"></div><div class="a nw td" style="left:165.5px;width:68.20000000000005px;text-align:right;top:31.5px"><i>100</i></div><div class="a" style="left:235.70000000000005px;top:30.0px;width:1px;height:14.5px;background:#c6c6c6"></div><div class="a nw td" style="left:236.20000000000005px;width:68.29999999999995px;text-align:right;top:31.5px"><i>100</i></div><div class="a" style="left:0;top:44.5px;width:307px;height:14.5px;background:#fff;border-bottom:1px solid #c6c6c6"></div><div class="a nw td" style="left:1.5px;top:46.0px"><i>293891</i></div><div class="a" style="left:54.89999999999998px;top:44.5px;width:1px;height:14.5px;background:#c6c6c6"></div><div class="a nw td" style="left:56.89999999999998px;top:46.0px">李坤山</div><div class="a" style="left:110.60000000000002px;top:44.5px;width:1px;height:14.5px;background:#c6c6c6"></div><div class="a nw td" style="left:112.60000000000002px;top:46.0px">切削</div><div class="a" style="left:165.0px;top:44.5px;width:1px;height:14.5px;background:#c6c6c6"></div><div class="a nw td" style="left:165.5px;width:68.20000000000005px;text-align:right;top:46.0px"><i>100</i></div><div class="a" style="left:235.70000000000005px;top:44.5px;width:1px;height:14.5px;background:#c6c6c6"></div><div class="a nw td" style="left:236.20000000000005px;width:68.29999999999995px;text-align:right;top:46.0px"><i>100</i></div><div class="a" style="left:0;top:59.0px;width:307px;height:14.5px;background:#fff;border-bottom:1px solid #c6c6c6"></div><div class="a nw td" style="left:1.5px;top:60.5px"><i>293891</i></div><div class="a" style="left:54.89999999999998px;top:59.0px;width:1px;height:14.5px;background:#c6c6c6"></div><div class="a nw td" style="left:56.89999999999998px;top:60.5px">高格</div><div class="a" style="left:110.60000000000002px;top:59.0px;width:1px;height:14.5px;background:#c6c6c6"></div><div class="a nw td" style="left:112.60000000000002px;top:60.5px"><i>11</i></div><div class="a" style="left:165.0px;top:59.0px;width:1px;height:14.5px;background:#c6c6c6"></div><div class="a nw td" style="left:165.5px;width:68.20000000000005px;text-align:right;top:60.5px"><i>100</i></div><div class="a" style="left:235.70000000000005px;top:59.0px;width:1px;height:14.5px;background:#c6c6c6"></div><div class="a nw td" style="left:236.20000000000005px;width:68.29999999999995px;text-align:right;top:60.5px"><i>100</i></div><div class="a" style="left:0;top:73.5px;width:307px;height:14.5px;background:#fff;border-bottom:1px solid #c6c6c6"></div><div class="a nw td" style="left:1.5px;top:75.0px"><i>293891</i></div><div class="a" style="left:54.89999999999998px;top:73.5px;width:1px;height:14.5px;background:#c6c6c6"></div><div class="a nw td" style="left:56.89999999999998px;top:75.0px">李坤山</div><div class="a" style="left:110.60000000000002px;top:73.5px;width:1px;height:14.5px;background:#c6c6c6"></div><div class="a nw td" style="left:112.60000000000002px;top:75.0px">抛光</div><div class="a" style="left:165.0px;top:73.5px;width:1px;height:14.5px;background:#c6c6c6"></div><div class="a nw td" style="left:165.5px;width:68.20000000000005px;text-align:right;top:75.0px"><i>100</i></div><div class="a" style="left:235.70000000000005px;top:73.5px;width:1px;height:14.5px;background:#c6c6c6"></div><div class="a nw td" style="left:236.20000000000005px;width:68.29999999999995px;text-align:right;top:75.0px"><i>100</i></div><div class="a" style="left:0;top:88.0px;width:307px;height:14.5px;background:#fff;border-bottom:1px solid #c6c6c6"></div><div class="a nw td" style="left:1.5px;top:89.5px"><i>293891</i></div><div class="a" style="left:54.89999999999998px;top:88.0px;width:1px;height:14.5px;background:#c6c6c6"></div><div class="a nw td" style="left:56.89999999999998px;top:89.5px">李坤山</div><div class="a" style="left:110.60000000000002px;top:88.0px;width:1px;height:14.5px;background:#c6c6c6"></div><div class="a nw td" style="left:112.60000000000002px;top:89.5px">检验</div><div class="a" style="left:165.0px;top:88.0px;width:1px;height:14.5px;background:#c6c6c6"></div><div class="a nw td" style="left:165.5px;width:68.20000000000005px;text-align:right;top:89.5px"><i>100</i></div><div class="a" style="left:235.70000000000005px;top:88.0px;width:1px;height:14.5px;background:#c6c6c6"></div><div class="a nw td" style="left:236.20000000000005px;width:68.29999999999995px;text-align:right;top:89.5px"><i>100</i></div><div class="a" style="left:0;top:102.5px;width:307px;height:14.5px;background:#fff;border-bottom:1px solid #c6c6c6"></div><div class="a nw td" style="left:1.5px;top:104.0px"><i>293891</i></div><div class="a" style="left:54.89999999999998px;top:102.5px;width:1px;height:14.5px;background:#c6c6c6"></div><div class="a nw td" style="left:56.89999999999998px;top:104.0px">李坤山</div><div class="a" style="left:110.60000000000002px;top:102.5px;width:1px;height:14.5px;background:#c6c6c6"></div><div class="a nw td" style="left:112.60000000000002px;top:104.0px"><i>6</i></div><div class="a" style="left:165.0px;top:102.5px;width:1px;height:14.5px;background:#c6c6c6"></div><div class="a nw td" style="left:165.5px;width:68.20000000000005px;text-align:right;top:104.0px"><i>100</i></div><div class="a" style="left:235.70000000000005px;top:102.5px;width:1px;height:14.5px;background:#c6c6c6"></div><div class="a nw td" style="left:236.20000000000005px;width:68.29999999999995px;text-align:right;top:104.0px"><i>100</i></div><div class="a" style="left:0;top:117.0px;width:307px;height:14.5px;background:#fff;border-bottom:1px solid #c6c6c6"></div><div class="a nw td" style="left:1.5px;top:118.5px"><i>293891</i></div><div class="a" style="left:54.89999999999998px;top:117.0px;width:1px;height:14.5px;background:#c6c6c6"></div><div class="a nw td" style="left:56.89999999999998px;top:118.5px">李坤山</div><div class="a" style="left:110.60000000000002px;top:117.0px;width:1px;height:14.5px;background:#c6c6c6"></div><div class="a nw td" style="left:112.60000000000002px;top:118.5px"><i>7</i></div><div class="a" style="left:165.0px;top:117.0px;width:1px;height:14.5px;background:#c6c6c6"></div><div class="a nw td" style="left:165.5px;width:68.20000000000005px;text-align:right;top:118.5px"><i>100</i></div><div class="a" style="left:235.70000000000005px;top:117.0px;width:1px;height:14.5px;background:#c6c6c6"></div><div class="a nw td" style="left:236.20000000000005px;width:68.29999999999995px;text-align:right;top:118.5px"><i>100</i></div><div class="a" style="left:0;top:131.5px;width:307px;height:14.5px;background:#fff;border-bottom:1px solid #c6c6c6"></div><div class="a nw td" style="left:1.5px;top:133.0px"><i>293891</i></div><div class="a" style="left:54.89999999999998px;top:131.5px;width:1px;height:14.5px;background:#c6c6c6"></div><div class="a nw td" style="left:56.89999999999998px;top:133.0px">高格</div><div class="a" style="left:110.60000000000002px;top:131.5px;width:1px;height:14.5px;background:#c6c6c6"></div><div class="a nw td" style="left:112.60000000000002px;top:133.0px">酸洗</div><div class="a" style="left:165.0px;top:131.5px;width:1px;height:14.5px;background:#c6c6c6"></div><div class="a nw td" style="left:165.5px;width:68.20000000000005px;text-align:right;top:133.0px"><i>100</i></div><div class="a" style="left:235.70000000000005px;top:131.5px;width:1px;height:14.5px;background:#c6c6c6"></div><div class="a nw td" style="left:236.20000000000005px;width:68.29999999999995px;text-align:right;top:133.0px"><i>100</i></div><div class="a" style="left:0;top:0;width:307px;height:15.5px;background:#fff;border:1px solid #1e1e1e;border-bottom-width:1.3px"></div><div class="a nw th" style="left:1.5px;top:2.5px">产品</div><div class="a" style="left:54.89999999999998px;top:0;width:1px;height:15.5px;background:#555"></div><div class="a nw th" style="left:56.89999999999998px;top:2.5px">员工号</div><div class="a" style="left:110.60000000000002px;top:0;width:1px;height:15.5px;background:#555"></div><div class="a nw th" style="left:112.60000000000002px;top:2.5px">工序号</div><div class="a" style="left:165.0px;top:0;width:1px;height:15.5px;background:#555"></div><div class="a nw th" style="left:167.0px;top:2.5px">派工数量</div><div class="a" style="left:235.70000000000005px;top:0;width:1px;height:15.5px;background:#555"></div><div class="a nw th" style="left:237.70000000000005px;top:2.5px">完成数量</div><div class="a" style="left:307px;top:0;width:13px;height:138.0px;background:#f1f1f1;background-image:repeating-linear-gradient(45deg,#ebebeb 0 1px,#f7f7f7 1px 2px)"></div><div class="a" style="left:307px;top:0;width:13px;height:15.5px;background:#f0f0f0;border:1px solid #1e1e1e;border-width:1px 1.5px 1.5px 1px"></div><div class="a" style="left:309.8px;top:5px;width:0;height:0;border-left:3.8px solid transparent;border-right:3.8px solid transparent;border-bottom:5px solid #111"></div><div class="a" style="left:307px;top:15.5px;width:13px;height:87px;background:#ececec;border:1px solid #1e1e1e;border-width:0 1.5px 1.5px 0"></div><div class="a" style="left:307px;top:122.5px;width:13px;height:15.5px;background:#f0f0f0;border:1px solid #1e1e1e;border-width:1px 1.5px 1.5px 1px"></div><div class="a" style="left:309.8px;top:127.5px;width:0;height:0;border-left:3.8px solid transparent;border-right:3.8px solid transparent;border-top:5px solid #111"></div><div class="a" style="left:0;top:0;width:320px;height:138.0px;border:1px solid #a0a0a0;border-top:none"></div><div class="a" style="left:307px;top:0;width:13px;height:138.0px;border-right:1.5px solid #1e1e1e"></div></div><div class="a" style="left:1074.5px;top:784px;width:337.5px;height:184px;background:#fff;border:1px solid #a9a9a9"></div><div class="a nw ttl" style="left:1077.5px;top:794.5px">成品入库情况</div><div class="a" style="left:1077px;top:823.5px;width:331.5px;height:138.0px;background:#fff;overflow:hidden"><div class="a" style="left:0;top:15.5px;width:318.5px;height:14.5px;background:#efefef;border-bottom:1px solid #c6c6c6"></div><div class="a nw td" style="left:1.5px;top:17.0px"><i>W190306001</i></div><div class="a" style="left:75.0px;top:15.5px;width:1px;height:14.5px;background:#c6c6c6"></div><div class="a nw td" style="left:77.0px;top:17.0px">成品库</div><div class="a" style="left:137.20000000000005px;top:15.5px;width:1px;height:14.5px;background:#c6c6c6"></div><div class="a nw td" style="left:139.20000000000005px;top:17.0px"><i>PIII866</i>桌上型个人电脑</div><div class="a" style="left:283.0px;top:15.5px;width:1px;height:14.5px;background:#c6c6c6"></div><div class="a nw td" style="left:283.5px;width:32.5px;text-align:right;top:17.0px"><i>5</i></div><div class="a" style="left:0;top:30.0px;width:318.5px;height:14.5px;background:#fff;border-bottom:1px solid #c6c6c6"></div><div class="a nw td" style="left:1.5px;top:31.5px"><i>W190818002</i></div><div class="a" style="left:75.0px;top:30.0px;width:1px;height:14.5px;background:#c6c6c6"></div><div class="a nw td" style="left:77.0px;top:31.5px">成品库</div><div class="a" style="left:137.20000000000005px;top:30.0px;width:1px;height:14.5px;background:#c6c6c6"></div><div class="a nw td" style="left:139.20000000000005px;top:31.5px"><i>PIII866</i>桌上型个人电脑</div><div class="a" style="left:283.0px;top:30.0px;width:1px;height:14.5px;background:#c6c6c6"></div><div class="a nw td" style="left:283.5px;width:32.5px;text-align:right;top:31.5px"><i>3000</i></div><div class="a" style="left:0;top:44.5px;width:318.5px;height:14.5px;background:#fff;border-bottom:1px solid #c6c6c6"></div><div class="a nw td" style="left:1.5px;top:46.0px"><i>W190818003</i></div><div class="a" style="left:75.0px;top:44.5px;width:1px;height:14.5px;background:#c6c6c6"></div><div class="a nw td" style="left:77.0px;top:46.0px">成品库</div><div class="a" style="left:137.20000000000005px;top:44.5px;width:1px;height:14.5px;background:#c6c6c6"></div><div class="a nw td" style="left:139.20000000000005px;top:46.0px"><i>PIII866</i>桌上型个人电脑</div><div class="a" style="left:283.0px;top:44.5px;width:1px;height:14.5px;background:#c6c6c6"></div><div class="a nw td" style="left:283.5px;width:32.5px;text-align:right;top:46.0px"><i>3000</i></div><div class="a" style="left:0;top:59.0px;width:318.5px;height:14.5px;background:#fff;border-bottom:1px solid #c6c6c6"></div><div class="a nw td" style="left:1.5px;top:60.5px"><i>W190818004</i></div><div class="a" style="left:75.0px;top:59.0px;width:1px;height:14.5px;background:#c6c6c6"></div><div class="a nw td" style="left:77.0px;top:60.5px">成品库</div><div class="a" style="left:137.20000000000005px;top:59.0px;width:1px;height:14.5px;background:#c6c6c6"></div><div class="a nw td" style="left:139.20000000000005px;top:60.5px"><i>PIII866</i>桌上型个人电脑</div><div class="a" style="left:283.0px;top:59.0px;width:1px;height:14.5px;background:#c6c6c6"></div><div class="a nw td" style="left:283.5px;width:32.5px;text-align:right;top:60.5px"><i>3000</i></div><div class="a" style="left:0;top:73.5px;width:318.5px;height:14.5px;background:#fff;border-bottom:1px solid #c6c6c6"></div><div class="a nw td" style="left:1.5px;top:75.0px"><i>W190818005</i></div><div class="a" style="left:75.0px;top:73.5px;width:1px;height:14.5px;background:#c6c6c6"></div><div class="a nw td" style="left:77.0px;top:75.0px">成品库</div><div class="a" style="left:137.20000000000005px;top:73.5px;width:1px;height:14.5px;background:#c6c6c6"></div><div class="a nw td" style="left:139.20000000000005px;top:75.0px"><i>PIII866</i>桌上型个人电脑</div><div class="a" style="left:283.0px;top:73.5px;width:1px;height:14.5px;background:#c6c6c6"></div><div class="a nw td" style="left:283.5px;width:32.5px;text-align:right;top:75.0px"><i>3000</i></div><div class="a" style="left:0;top:88.0px;width:318.5px;height:14.5px;background:#fff;border-bottom:1px solid #c6c6c6"></div><div class="a nw td" style="left:1.5px;top:89.5px"><i>W200416005</i></div><div class="a" style="left:75.0px;top:88.0px;width:1px;height:14.5px;background:#c6c6c6"></div><div class="a nw td" style="left:77.0px;top:89.5px">半成品仓</div><div class="a" style="left:137.20000000000005px;top:88.0px;width:1px;height:14.5px;background:#c6c6c6"></div><div class="a nw td" style="left:139.20000000000005px;top:89.5px">压铸半成品<i>1</i></div><div class="a" style="left:283.0px;top:88.0px;width:1px;height:14.5px;background:#c6c6c6"></div><div class="a nw td" style="left:283.5px;width:32.5px;text-align:right;top:89.5px"><i>1</i></div><div class="a" style="left:0;top:102.5px;width:318.5px;height:14.5px;background:#fff;border-bottom:1px solid #c6c6c6"></div><div class="a nw td" style="left:1.5px;top:104.0px"><i>W190306001</i></div><div class="a" style="left:75.0px;top:102.5px;width:1px;height:14.5px;background:#c6c6c6"></div><div class="a nw td" style="left:77.0px;top:104.0px">成品库</div><div class="a" style="left:137.20000000000005px;top:102.5px;width:1px;height:14.5px;background:#c6c6c6"></div><div class="a nw td" style="left:139.20000000000005px;top:104.0px"><i>PIII866</i>桌上型个人电脑</div><div class="a" style="left:283.0px;top:102.5px;width:1px;height:14.5px;background:#c6c6c6"></div><div class="a nw td" style="left:283.5px;width:32.5px;text-align:right;top:104.0px"><i>5</i></div><div class="a" style="left:0;top:117.0px;width:318.5px;height:14.5px;background:#fff;border-bottom:1px solid #c6c6c6"></div><div class="a nw td" style="left:1.5px;top:118.5px"><i>W190903001</i></div><div class="a" style="left:75.0px;top:117.0px;width:1px;height:14.5px;background:#c6c6c6"></div><div class="a nw td" style="left:77.0px;top:118.5px">成品库</div><div class="a" style="left:137.20000000000005px;top:117.0px;width:1px;height:14.5px;background:#c6c6c6"></div><div class="a nw td" style="left:139.20000000000005px;top:118.5px"><i>2010</i>新款<i>Pad</i></div><div class="a" style="left:283.0px;top:117.0px;width:1px;height:14.5px;background:#c6c6c6"></div><div class="a nw td" style="left:283.5px;width:32.5px;text-align:right;top:118.5px"><i>10</i></div><div class="a" style="left:0;top:131.5px;width:318.5px;height:14.5px;background:#fff;border-bottom:1px solid #c6c6c6"></div><div class="a nw td" style="left:1.5px;top:133.0px"><i>W190903001</i></div><div class="a" style="left:75.0px;top:131.5px;width:1px;height:14.5px;background:#c6c6c6"></div><div class="a nw td" style="left:77.0px;top:133.0px">成品库</div><div class="a" style="left:137.20000000000005px;top:131.5px;width:1px;height:14.5px;background:#c6c6c6"></div><div class="a nw td" style="left:139.20000000000005px;top:133.0px"><i>2010</i>新款<i>Pad</i></div><div class="a" style="left:283.0px;top:131.5px;width:1px;height:14.5px;background:#c6c6c6"></div><div class="a nw td" style="left:283.5px;width:32.5px;text-align:right;top:133.0px"><i>10</i></div><div class="a" style="left:0;top:0;width:318.5px;height:15.5px;background:#fff;border:1px solid #1e1e1e;border-bottom-width:1.3px"></div><div class="a nw th" style="left:1.5px;top:2.5px">工单号</div><div class="a" style="left:75.0px;top:0;width:1px;height:15.5px;background:#555"></div><div class="a nw th" style="left:77.0px;top:2.5px">仓库</div><div class="a" style="left:137.20000000000005px;top:0;width:1px;height:15.5px;background:#555"></div><div class="a nw th" style="left:139.20000000000005px;top:2.5px">产品</div><div class="a" style="left:283.0px;top:0;width:1px;height:15.5px;background:#555"></div><div class="a nw th" style="left:285.0px;top:2.5px">数量</div><div class="a" style="left:318.5px;top:0;width:13.0px;height:138.0px;background:#f1f1f1;background-image:repeating-linear-gradient(45deg,#ebebeb 0 1px,#f7f7f7 1px 2px)"></div><div class="a" style="left:318.5px;top:0;width:13.0px;height:15.5px;background:#f0f0f0;border:1px solid #1e1e1e;border-width:1px 1.5px 1.5px 1px"></div><div class="a" style="left:321.3px;top:5px;width:0;height:0;border-left:3.8px solid transparent;border-right:3.8px solid transparent;border-bottom:5px solid #111"></div><div class="a" style="left:318.5px;top:15.5px;width:13.0px;height:87px;background:#ececec;border:1px solid #1e1e1e;border-width:0 1.5px 1.5px 0"></div><div class="a" style="left:318.5px;top:122.5px;width:13.0px;height:15.5px;background:#f0f0f0;border:1px solid #1e1e1e;border-width:1px 1.5px 1.5px 1px"></div><div class="a" style="left:321.3px;top:127.5px;width:0;height:0;border-left:3.8px solid transparent;border-right:3.8px solid transparent;border-top:5px solid #111"></div><div class="a" style="left:0;top:0;width:331.5px;height:138.0px;border:1px solid #a0a0a0;border-top:none"></div><div class="a" style="left:318.5px;top:0;width:13.0px;height:138.0px;border-right:1.5px solid #1e1e1e"></div></div><!-- /TABLES -->
<!-- BODY -->
</body></html>
